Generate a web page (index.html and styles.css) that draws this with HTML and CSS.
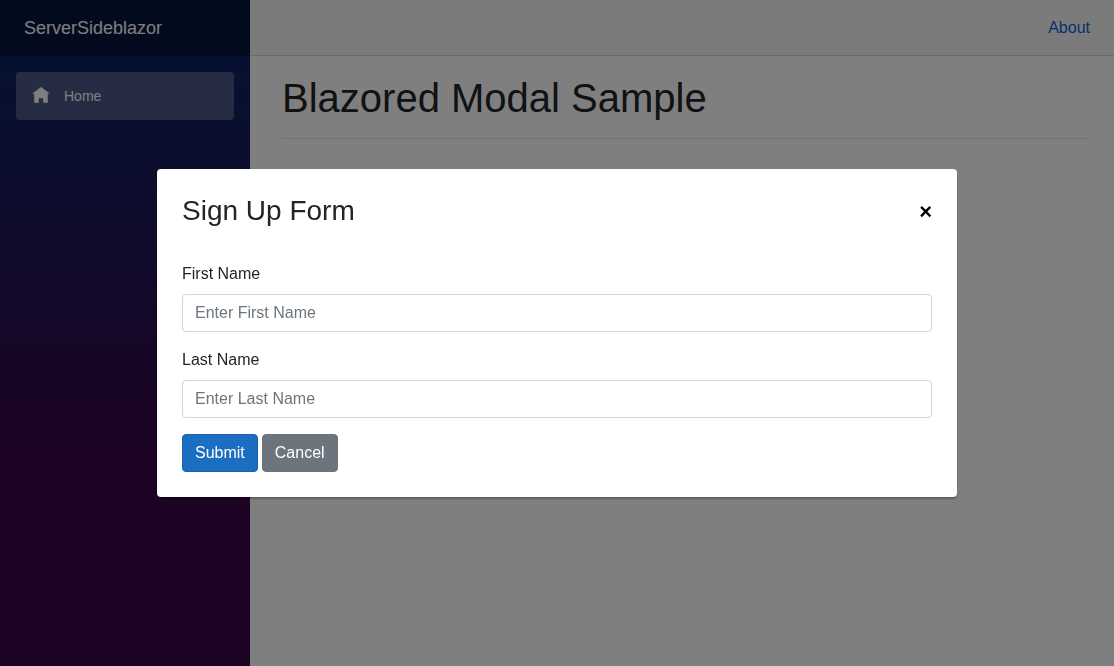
FILE: index.html
```html
<!DOCTYPE html>
<html lang="en">
<head>
  <meta charset="utf-8">
  <meta name="viewport" content="width=device-width, initial-scale=1">
  <title>ServerSideblazor</title>
  <link rel="stylesheet" href="styles.css">
</head>
<body>
  <div class="app">
    <aside class="sidebar">
      <div class="brand-row">
        <a class="brand" href="#">ServerSideblazor</a>
      </div>
      <nav class="nav">
        <a class="nav-link active" href="#">
          <svg class="nav-icon" viewBox="0 0 8 8" aria-hidden="true"><path d="M4 0l-4 3h1v4h2v-2h2v2h2v-4.03l1 .03-4-3z"/></svg>
          <span>Home</span>
        </a>
      </nav>
    </aside>
    <main class="main">
      <header class="top-row">
        <a class="about-link" href="#">About</a>
      </header>
      <section class="content">
        <h1 class="page-title">Blazored Modal Sample</h1>
        <hr class="divider">
      </section>
    </main>
  </div>

  <div class="overlay">
    <div class="modal" role="dialog" aria-modal="true" aria-labelledby="modal-title">
      <div class="modal-header">
        <h3 class="modal-title" id="modal-title">Sign Up Form</h3>
        <button class="modal-close" type="button" aria-label="Close">×</button>
      </div>
      <form class="form">
        <div class="form-group">
          <label for="first-name">First Name</label>
          <input class="form-control" id="first-name" type="text" placeholder="Enter First Name">
        </div>
        <div class="form-group">
          <label for="last-name">Last Name</label>
          <input class="form-control" id="last-name" type="text" placeholder="Enter Last Name">
        </div>
        <div class="form-actions">
          <button class="btn btn-primary" type="submit">Submit</button>
          <button class="btn btn-secondary" type="button">Cancel</button>
        </div>
      </form>
    </div>
  </div>
</body>
</html>
```
FILE: styles.css
```css
*,
*::before,
*::after {
  box-sizing: border-box;
}

body {
  margin: 0;
  font-family: "Liberation Sans", Arial, sans-serif;
  font-size: 16px;
  line-height: 24px;
  color: #212529;
  background: #fff;
}

.app {
  display: flex;
  min-height: 100vh;
}

.sidebar {
  flex: 0 0 250px;
  background: linear-gradient(180deg, #052767 0%, #3a0647 70%);
}

.brand-row {
  display: flex;
  align-items: center;
  height: 56px;
  padding: 0 24px;
  background: rgba(0, 0, 0, 0.4);
}

.brand {
  font-size: 18px;
  color: #fff;
  text-decoration: none;
}

.nav {
  padding: 16px;
}

.nav-link {
  display: flex;
  align-items: center;
  gap: 14px;
  height: 48px;
  padding: 0 16px;
  border-radius: 4px;
  font-size: 14px;
  color: #d7d7d7;
  text-decoration: none;
}

.nav-link.active {
  color: #fff;
  background: rgba(255, 255, 255, 0.25);
}

.nav-icon {
  width: 18px;
  height: 18px;
  fill: currentColor;
}

.main {
  flex: 1;
  min-width: 0;
}

.top-row {
  display: flex;
  align-items: center;
  justify-content: flex-end;
  height: 56px;
  padding: 0 24px 0 32px;
  background: #f7f7f7;
  border-bottom: 1px solid #d6d5d5;
}

.about-link {
  color: #0366d6;
  text-decoration: none;
}

.content {
  padding: 18px 24px 0 32px;
}

.page-title {
  margin: 0 0 16px;
  font-size: 40px;
  font-weight: 500;
  line-height: 48px;
}

.divider {
  margin: 0;
  border: 0;
  border-top: 1px solid rgba(0, 0, 0, 0.1);
}

.overlay {
  position: fixed;
  inset: 0;
  display: flex;
  align-items: center;
  justify-content: center;
  padding: 16px;
  background: rgba(0, 0, 0, 0.5);
}

.modal {
  width: 100%;
  max-width: 800px;
  padding: 25px;
  border-radius: 4px;
  background: #fff;
  box-shadow: 0 2px 2px rgba(0, 0, 0, 0.25);
}

.modal-header {
  display: flex;
  align-items: flex-start;
  justify-content: space-between;
  padding-bottom: 32px;
}

.modal-title {
  margin: 0;
  font-size: 28px;
  font-weight: 500;
  line-height: 34px;
}

.modal-close {
  padding: 0;
  border: 0;
  background: none;
  font: bold 22px/36px "Liberation Sans", Arial, sans-serif;
  color: #000;
  cursor: pointer;
}

.form,
.form-group {
  display: flex;
  flex-direction: column;
}

.form {
  gap: 16px;
}

.form-group {
  gap: 8px;
}

.form-control {
  width: 100%;
  height: 38px;
  padding: 6px 12px;
  border: 1px solid #ced4da;
  border-radius: 4px;
  font: inherit;
  color: #495057;
  background: #fff;
}

.form-control::placeholder {
  color: #6c757d;
  opacity: 1;
}

.form-actions {
  display: flex;
  gap: 4px;
}

.btn {
  height: 38px;
  padding: 6px 12px;
  border: 1px solid transparent;
  border-radius: 4px;
  font: inherit;
  color: #fff;
  cursor: pointer;
}

.btn-primary {
  background: #1b6ec2;
  border-color: #1861ac;
}

.btn-secondary {
  background: #6c757d;
  border-color: #6c757d;
}
```
